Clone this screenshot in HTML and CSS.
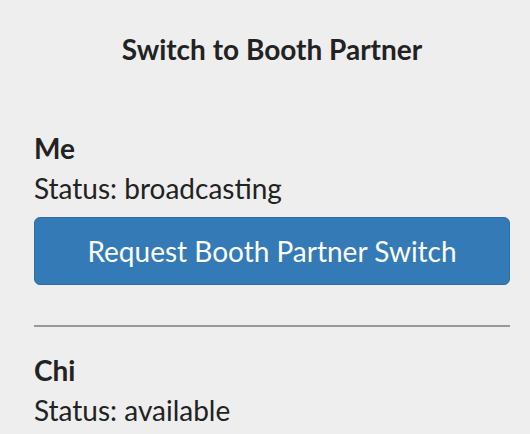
FILE: index.html
```html
<!DOCTYPE html>
<html lang="en">
<head>
  <meta charset="UTF-8">
  <meta name="viewport" content="width=device-width, initial-scale=1.0">
  <title>Switch to Booth Partner</title>
  <link rel="stylesheet" href="styles.css">
</head>
<body>
  <div class="panel">
    <h2 class="title">Switch to Booth Partner</h2>

    <div class="partner">
      <div class="name">Me</div>
      <div class="status">Status: broadcasting</div>
      <button class="btn" type="button">Request Booth Partner Switch</button>
    </div>

    <hr class="divider">

    <div class="partner">
      <div class="name">Chi</div>
      <div class="status">Status: available</div>
    </div>
  </div>
</body>
</html>
```

FILE: styles.css
```css
* {
  box-sizing: border-box;
}

body {
  margin: 0;
  background-color: #eeeeee;
  color: #222222;
  font-family: Lato, "Open Sans", sans-serif;
  font-size: 28px;
  line-height: 40px;
}

.panel {
  padding: 29px 20px 0 34px;
}

.title {
  margin: 0 0 59px;
  font-size: 28px;
  font-weight: bold;
  line-height: 40px;
  text-align: center;
}

.name {
  font-weight: bold;
}

.btn {
  display: block;
  width: 100%;
  margin-top: 9px;
  padding: 13px 12px;
  border: 1px solid #2e6da4;
  border-radius: 6px;
  background-color: #337ab7;
  color: #ffffff;
  font-family: inherit;
  font-size: 28px;
  line-height: 40px;
  cursor: pointer;
}

.divider {
  margin: 40px 0 23px;
  border: 0;
  border-top: 2px solid #999999;
}
```
